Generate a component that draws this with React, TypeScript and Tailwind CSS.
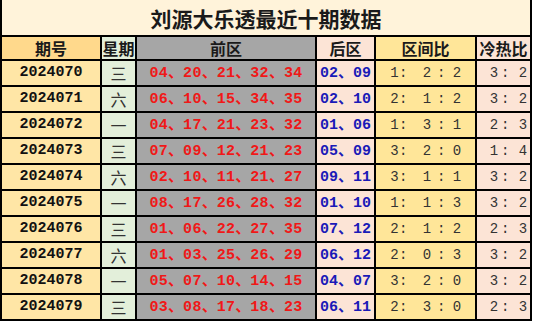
import React from "react";

const rows = [
  ["2024070", "三", "04、20、21、32、34", "02、09", [1, 2, 2], [3, 2]],
  ["2024071", "六", "06、10、15、34、35", "02、10", [2, 1, 2], [3, 2]],
  ["2024072", "一", "04、17、21、23、32", "01、06", [1, 3, 1], [2, 3]],
  ["2024073", "三", "07、09、12、21、23", "05、09", [3, 2, 0], [1, 4]],
  ["2024074", "六", "02、10、11、21、27", "09、11", [3, 1, 1], [3, 2]],
  ["2024075", "一", "08、17、26、28、32", "01、10", [1, 1, 3], [3, 2]],
  ["2024076", "三", "01、06、22、27、35", "07、12", [2, 1, 2], [2, 3]],
  ["2024077", "六", "01、03、25、26、29", "06、12", [2, 0, 3], [3, 2]],
  ["2024078", "一", "05、07、10、14、15", "04、07", [3, 2, 0], [3, 2]],
  ["2024079", "三", "03、08、17、18、23", "06、11", [2, 3, 0], [2, 3]],
] as const;

const cjk = { fontFamily: '"Noto Sans CJK SC", "Noto Sans", sans-serif' };
const mono = { fontFamily: '"Liberation Mono", "Noto Sans CJK SC", monospace' };

function Nums({ text }: { text: string }) {
  const parts = text.split("、");
  return (
    <span className="whitespace-pre">
      {parts.map((p, i) => (
        <React.Fragment key={i}>
          <span style={mono}>{p}</span>
          {i < parts.length - 1 && (
            <span className="inline-block w-[15px] text-left" style={cjk}>
              、
            </span>
          )}
        </React.Fragment>
      ))}
    </span>
  );
}

export default function App() {
  return (
    <div className="w-[534px] h-[321px] bg-white">
      <div className="w-[532px] bg-black px-[2px] pb-[2px] grid grid-cols-[98px_33px_178px_57px_99px_53px] grid-rows-[35px_22px_repeat(10,24px)] gap-[2px]">
        <div
          className="col-span-6 bg-[#fff3da] flex items-center justify-center text-[21px] font-bold text-[#1a1a1a] pt-[2px]"
          style={cjk}
        >
          刘源大乐透最近十期数据
        </div>
        {[
          ["期号", "bg-[#ffd98c]"],
          ["星期", "bg-[#e3efda]"],
          ["前区", "bg-[#a6a6a6]"],
          ["后区", "bg-[#fce4d6]"],
          ["区间比", "bg-[#ffe699]"],
          ["冷热比", "bg-[#fce4d6]"],
        ].map(([t, bg]) => (
          <div
            key={t}
            className={`${bg} flex items-center justify-center text-[16px] font-bold text-[#1a1a1a] leading-none`}
            style={cjk}
          >
            {t}
          </div>
        ))}
        {rows.map((r) => (
          <React.Fragment key={r[0]}>
            <div
              className="bg-[#ffe6a6] flex items-center justify-center text-[15px] font-bold text-[#111]"
              style={mono}
            >
              {r[0]}
            </div>
            <div
              className="bg-[#e3efda] flex items-center justify-center text-[16px] font-normal text-[#333]"
              style={cjk}
            >
              {r[1]}
            </div>
            <div className="bg-[#a6a6a6] flex items-center justify-center text-[15px] font-bold text-[#f01818] tracking-[0.3px]">
              <Nums text={r[2]} />
            </div>
            <div className="bg-[#fce4d6] flex items-center justify-center text-[15px] font-bold text-[#1a1ab8]">
              <Nums text={r[3]} />
            </div>
            <div
              className="bg-[#ffe699] flex items-center text-[14px] text-[#333]"
              style={mono}
            >
              <span className="inline-block w-[9px] ml-[14px] text-center">{r[4][0]}</span>
              <span className="inline-block w-[6px] text-center">:</span>
              <span className="inline-block w-[9px] ml-[17.5px] text-center">{r[4][1]}</span>
              <span className="inline-block w-[6px] ml-[5.5px] text-center">:</span>
              <span className="inline-block w-[9px] ml-[9.5px] text-center">{r[4][2]}</span>
            </div>
            <div
              className="bg-[#fce4d6] flex items-center text-[14px] text-[#333]"
              style={mono}
            >
              <span className="inline-block w-[9px] ml-[12.5px] text-center">{r[5][0]}</span>
              <span className="inline-block w-[6px] ml-[2.5px] text-center">:</span>
              <span className="inline-block w-[9px] ml-[11.5px] text-center">{r[5][1]}</span>
            </div>
          </React.Fragment>
        ))}
      </div>
    </div>
  );
}
